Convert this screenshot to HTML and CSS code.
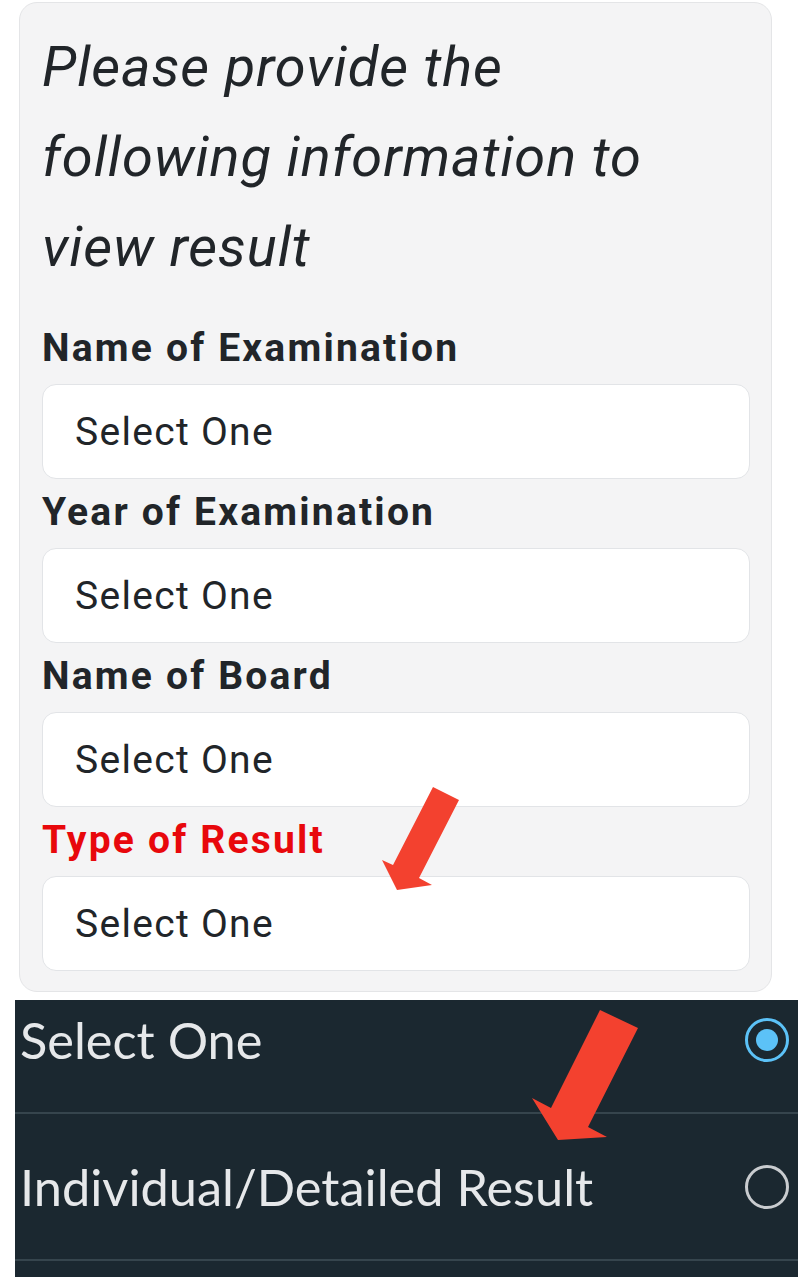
FILE: index.html
```html
<!DOCTYPE html>
<html>
<head>
<meta charset="utf-8">
<link rel="stylesheet" href="styles.css">
</head>
<body>
<div class="page">
  <div class="card">
    <h1 class="intro">Please provide the following information to view result</h1>
    <div class="field">
      <label class="label">Name of Examination</label>
      <div class="select">Select One</div>
    </div>
    <div class="field">
      <label class="label">Year of Examination</label>
      <div class="select">Select One</div>
    </div>
    <div class="field">
      <label class="label">Name of Board</label>
      <div class="select">Select One</div>
    </div>
    <div class="field last">
      <label class="label red">Type of Result</label>
      <div class="select">Select One</div>
    </div>
  </div>

  <div class="dropdown">
    <div class="option first">
      <span class="opt-text">Select One</span>
      <span class="radio checked"></span>
    </div>
    <div class="option">
      <span class="opt-text">Individual/Detailed Result</span>
      <span class="radio"></span>
    </div>
  </div>

  <svg class="arrows" width="798" height="1280" viewBox="0 0 798 1280">
    <polygon points="433,787 459,800 419,878 432,885 397,890 382,860 393,865" fill="#f3412f"/>
    <polygon points="600,1010 638,1028 588,1127 607,1137 558,1140 532,1098 551,1108" fill="#f3412f"/>
  </svg>
</div>
</body>
</html>
```

FILE: styles.css
```css
html, body {
  margin: 0;
  padding: 0;
  background: #ffffff;
}

.page {
  position: relative;
  width: 798px;
  height: 1280px;
  overflow: hidden;
  font-family: Roboto, "Liberation Sans", sans-serif;
}

.card {
  margin: 2px 26px 0 19px;
  box-sizing: border-box;
  width: 753px;
  background: #f4f4f5;
  border: 1px solid #e4e5e7;
  border-radius: 18px;
  padding: 19px 21px 20px 22px;
}

.intro {
  margin: 0 0 33px 0;
  max-width: 660px;
  font-family: Roboto, "Liberation Sans", sans-serif;
  font-style: italic;
  font-weight: 400;
  font-size: 56px;
  line-height: 90px;
  color: #212529;
  letter-spacing: 0.9px;
}

.field {
  display: flex;
  flex-direction: column;
  margin-bottom: 10px;
}

.field.last {
  margin-bottom: 0;
}

.label {
  font-weight: 700;
  font-size: 39px;
  line-height: 46px;
  letter-spacing: 2.2px;
  color: #212529;
  margin-bottom: 13px;
}

.label.red {
  color: #e8080c;
}

.select {
  box-sizing: border-box;
  height: 95px;
  background: #ffffff;
  border: 1px solid #e2e4e7;
  border-radius: 14px;
  padding-left: 32px;
  display: flex;
  align-items: center;
  font-size: 39px;
  letter-spacing: 1.3px;
  color: #212529;
}

.dropdown {
  margin: 8px 0 0 15px;
  width: 783px;
  height: 277px;
  background: #1b2830;
  overflow: hidden;
}

.option {
  height: 145px;
  border-bottom: 2px solid #36454d;
  display: flex;
  align-items: center;
  justify-content: space-between;
  padding: 0 9px 0 5px;
}

.option.first {
  margin-top: -33px;
}

.opt-text {
  font-family: Lato, "Open Sans", sans-serif;
  font-size: 50.5px;
  color: #e6e8ea;
}

.radio {
  box-sizing: border-box;
  width: 44px;
  height: 44px;
  border-radius: 50%;
  border: 3px solid #c9cccf;
  position: relative;
}

.radio.checked {
  border-color: #5cc2f7;
}

.radio.checked::after {
  content: "";
  position: absolute;
  left: 8px;
  top: 8px;
  width: 22px;
  height: 22px;
  border-radius: 50%;
  background: #5cc2f7;
}

.arrows {
  position: absolute;
  left: 0;
  top: 0;
  pointer-events: none;
}
```
